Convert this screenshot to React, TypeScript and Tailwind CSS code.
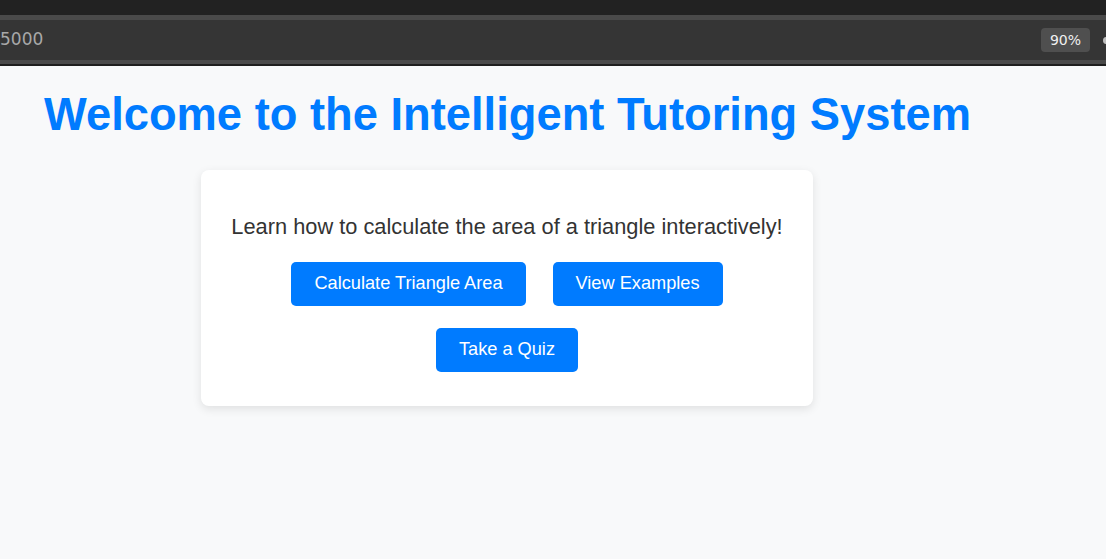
import { useState } from 'react';

const actions = ['Calculate Triangle Area', 'View Examples', 'Take a Quiz'];

const BrowserBar = () => {
  return (
    <div className="flex flex-col">
      <div className="h-[15px] bg-[#222222]" />
      <div className="h-[5px] bg-[#4a4a4a]" />
      <div className="h-[40px] bg-[#353535] flex items-center justify-between overflow-hidden">
        <span className="ml-0 text-[17px] text-[#a8a8a8] font-['DejaVu_Sans',sans-serif]">5000</span>
        <div className="flex items-center">
          <span className="h-[24px] w-[49px] rounded-[4px] bg-[#4f4f4f] text-[#f0f0f0] text-[14px] flex items-center justify-center font-['DejaVu_Sans',sans-serif]">
            90%
          </span>
          <span className="ml-[13px] mr-[-4px] w-[7px] h-[7px] rounded-full bg-[#bdbdbd]" />
        </div>
      </div>
      <div className="h-[4px] bg-[#4a4a4a]" />
      <div className="h-[2px] bg-[#1e1e1e]" />
    </div>
  );
};

const App = () => {
  const [picked, setPicked] = useState<string | null>(null);

  return (
    <div className="min-h-[559px] bg-[#f8f9fa] font-['Liberation_Sans',Arial,sans-serif]">
      <BrowserBar />
      <div className="pl-[44px] pt-[24px]">
        <h1 className="text-[45.3px] leading-[50px] font-bold text-[#007bff]">
          Welcome to the Intelligent Tutoring System
        </h1>
        <div className="ml-[157px] mt-[30px] w-[612px] h-[236px] bg-white rounded-[8px] shadow-[0_3px_10px_rgba(0,0,0,0.1)] flex flex-col items-center pt-[44px]">
          <p className="text-[21.8px] leading-[25px] text-[#333333]">
            Learn how to calculate the area of a triangle interactively!
          </p>
          <div className="mt-[23px] w-[460px] flex flex-wrap justify-center gap-x-[27px] gap-y-[22px]">
            {actions.map((label) => (
              <button
                key={label}
                onClick={() => setPicked(label)}
                className={
                  'h-[44px] px-[23px] rounded-[5px] text-[18.2px] text-white ' +
                  (picked === label ? 'bg-[#0069d9]' : 'bg-[#007bff]')
                }
              >
                {label}
              </button>
            ))}
          </div>
        </div>
      </div>
    </div>
  );
};

export default App;
